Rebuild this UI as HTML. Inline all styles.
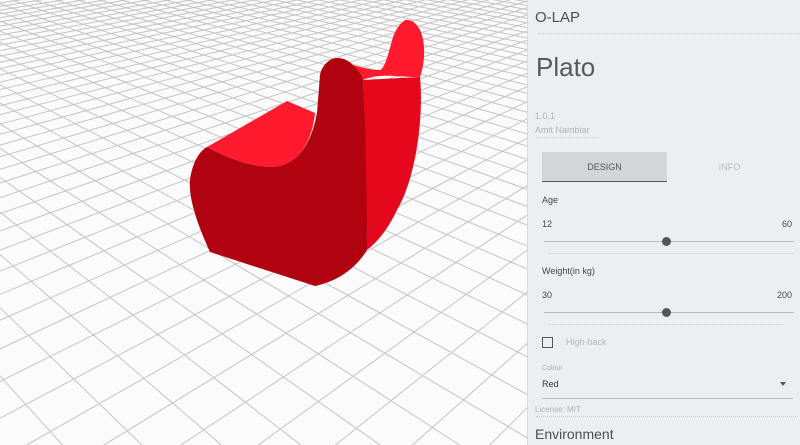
<!DOCTYPE html>
<html><head><meta charset="utf-8">
<style>
*{margin:0;padding:0;box-sizing:border-box}
html,body{width:800px;height:445px;overflow:hidden}
body{background:#f8f8f8;font-family:"Liberation Sans",sans-serif;position:relative}
#view{position:absolute;left:0;top:0;width:800px;height:445px;display:block}
#panel{position:absolute;left:527px;top:0;width:273px;height:445px;overflow:hidden;background:#eceff0;border-left:1px solid #d8dadb;color:#555}
.abs{position:absolute}
.dots{position:absolute;border-top:1px dotted #c8cacb}
</style></head><body>
<svg id="view" width="800" height="445" xmlns="http://www.w3.org/2000/svg">
<rect width="800" height="445" fill="#fbfbfb"/>
<g id="grid" stroke="#c4c4c4" stroke-width="1" fill="none"></g>
<path d="M363,80 C380,72 405,78 420,77 C426,60 425,40 420,30 C416,22 410,19 405,20 C398,25 395,32 393,37 C388,55 385,68 380,70 C370,70 360,67 353,65 Z" fill="#ff1a2d"/>
<path d="M363,80 L420,77 C424,120 415,180 397,210 C390,225 380,240 367,250 C366,190 365,130 363,80 Z" fill="#e5081c"/>
<path d="M207,147 L287,101 L315,113 C312,140 300,165 273,167 C250,167 225,157 207,147 Z" fill="#ff1a2d"/>
<path d="M207,147 C225,157 250,167 273,167 C300,165 312,140 317,113 L320,75 C322,65 330,58 337,58 C345,58 350,62 353,65 C358,70 362,75 363,80 C366,140 367,200 367,250 C355,270 335,282 315,286 L210,252 C200,230 188,200 190,180 C192,165 198,152 207,147 Z" fill="#b0020f"/>
</svg>
<div id="panel">
  <div class="abs" style="left:7px;top:9px;font-size:15px;color:#4a4f52">O-LAP</div>
  <div class="dots" style="left:10px;top:33px;width:262px"></div>
  <div class="abs" style="left:8px;top:52px;font-size:26px;color:#555a5c">Plato</div>
  <div class="abs" style="left:7px;top:111px;font-size:9px;color:#b0b2b3">1.0.1</div>
  <div class="abs" style="left:7px;top:125px;font-size:9px;color:#b0b2b3">Amit Nambiar</div>
  <div class="dots" style="left:8px;top:137px;width:63px"></div>
  <div class="abs" style="left:14px;top:152px;width:125px;height:30px;background:#d4d5d6;border-bottom:1px solid #555;font-size:9px;color:#555;text-align:center;line-height:30px">DESIGN</div>
  <div class="abs" style="left:139px;top:152px;width:125px;height:30px;font-size:9px;color:#b8b9ba;text-align:center;line-height:30px">INFO</div>
  <div class="abs" style="left:14px;top:195px;font-size:9px;color:#444">Age</div>
  <div class="abs" style="left:14px;top:219px;font-size:9px;color:#444">12</div>
  <div class="abs" style="right:8px;top:219px;font-size:9px;color:#444">60</div>
  <div class="abs" style="left:16px;top:241px;width:250px;height:1px;background:#bbb"></div>
  <div class="abs" style="left:134px;top:237px;width:9px;height:9px;border-radius:50%;background:#555"></div>
  <div class="dots" style="left:20px;top:253px;width:245px"></div>
  <div class="abs" style="left:14px;top:266px;font-size:9px;color:#444">Weight(in kg)</div>
  <div class="abs" style="left:14px;top:290px;font-size:9px;color:#444">30</div>
  <div class="abs" style="right:8px;top:290px;font-size:9px;color:#444">200</div>
  <div class="abs" style="left:16px;top:312px;width:250px;height:1px;background:#bbb"></div>
  <div class="abs" style="left:134px;top:308px;width:9px;height:9px;border-radius:50%;background:#555"></div>
  <div class="dots" style="left:20px;top:324px;width:235px"></div>
  <div class="abs" style="left:14px;top:337px;width:11px;height:11px;border:1.5px solid #555"></div>
  <div class="abs" style="left:38px;top:337px;font-size:9px;color:#b4b6b7">High-back</div>
  <div class="abs" style="left:14px;top:365px;font-size:7px;color:#aaa">Colour</div>
  <div class="abs" style="left:14px;top:379px;font-size:9px;color:#333">Red</div>
  <div class="abs" style="left:252px;top:382px;width:0;height:0;border-left:3.5px solid transparent;border-right:3.5px solid transparent;border-top:4px solid #555"></div>
  <div class="abs" style="left:14px;top:398px;width:251px;height:1px;background:#bbb"></div>
  <div class="abs" style="left:7px;top:405px;font-size:8px;color:#b0b2b3">License: MIT</div>
  <div class="dots" style="left:8px;top:416px;width:262px"></div>
  <div class="abs" style="left:7px;top:426px;font-size:14px;line-height:16px;color:#4a4f52">Environment</div>
</div>
<script>
(function(){
var g=document.getElementById('grid'),ns='http://www.w3.org/2000/svg';
var F=800,H=1,hz=-170,cx=330,a=0.8,cell=0.09;
function P(X,Z){var ca=Math.cos(a),sa=Math.sin(a);var x=X*ca-Z*sa,z=X*sa+Z*ca;return [cx+F*x/z,hz+F*H/z,z];}
var d='';
for(var i=-150;i<=150;i++){
 var pts=[];for(var j=-150;j<=250;j+=2){var p=P(i*cell,j*cell);if(p[2]>0.1)pts.push(p);}
 for(var k=0;k<pts.length;k++)d+=(k?'L':'M')+pts[k][0].toFixed(1)+','+pts[k][1].toFixed(1);
}
for(var j=-150;j<=250;j++){
 var Z=j*cell;var pts=[];for(var i=-150;i<=150;i+=2){var p=P(i*cell,Z);if(p[2]>0.1)pts.push(p);}
 for(var k=0;k<pts.length;k++)d+=(k?'L':'M')+pts[k][0].toFixed(1)+','+pts[k][1].toFixed(1);
}
var pa=document.createElementNS(ns,'path');pa.setAttribute('d',d);g.appendChild(pa);
})();
</script>
</body></html>
